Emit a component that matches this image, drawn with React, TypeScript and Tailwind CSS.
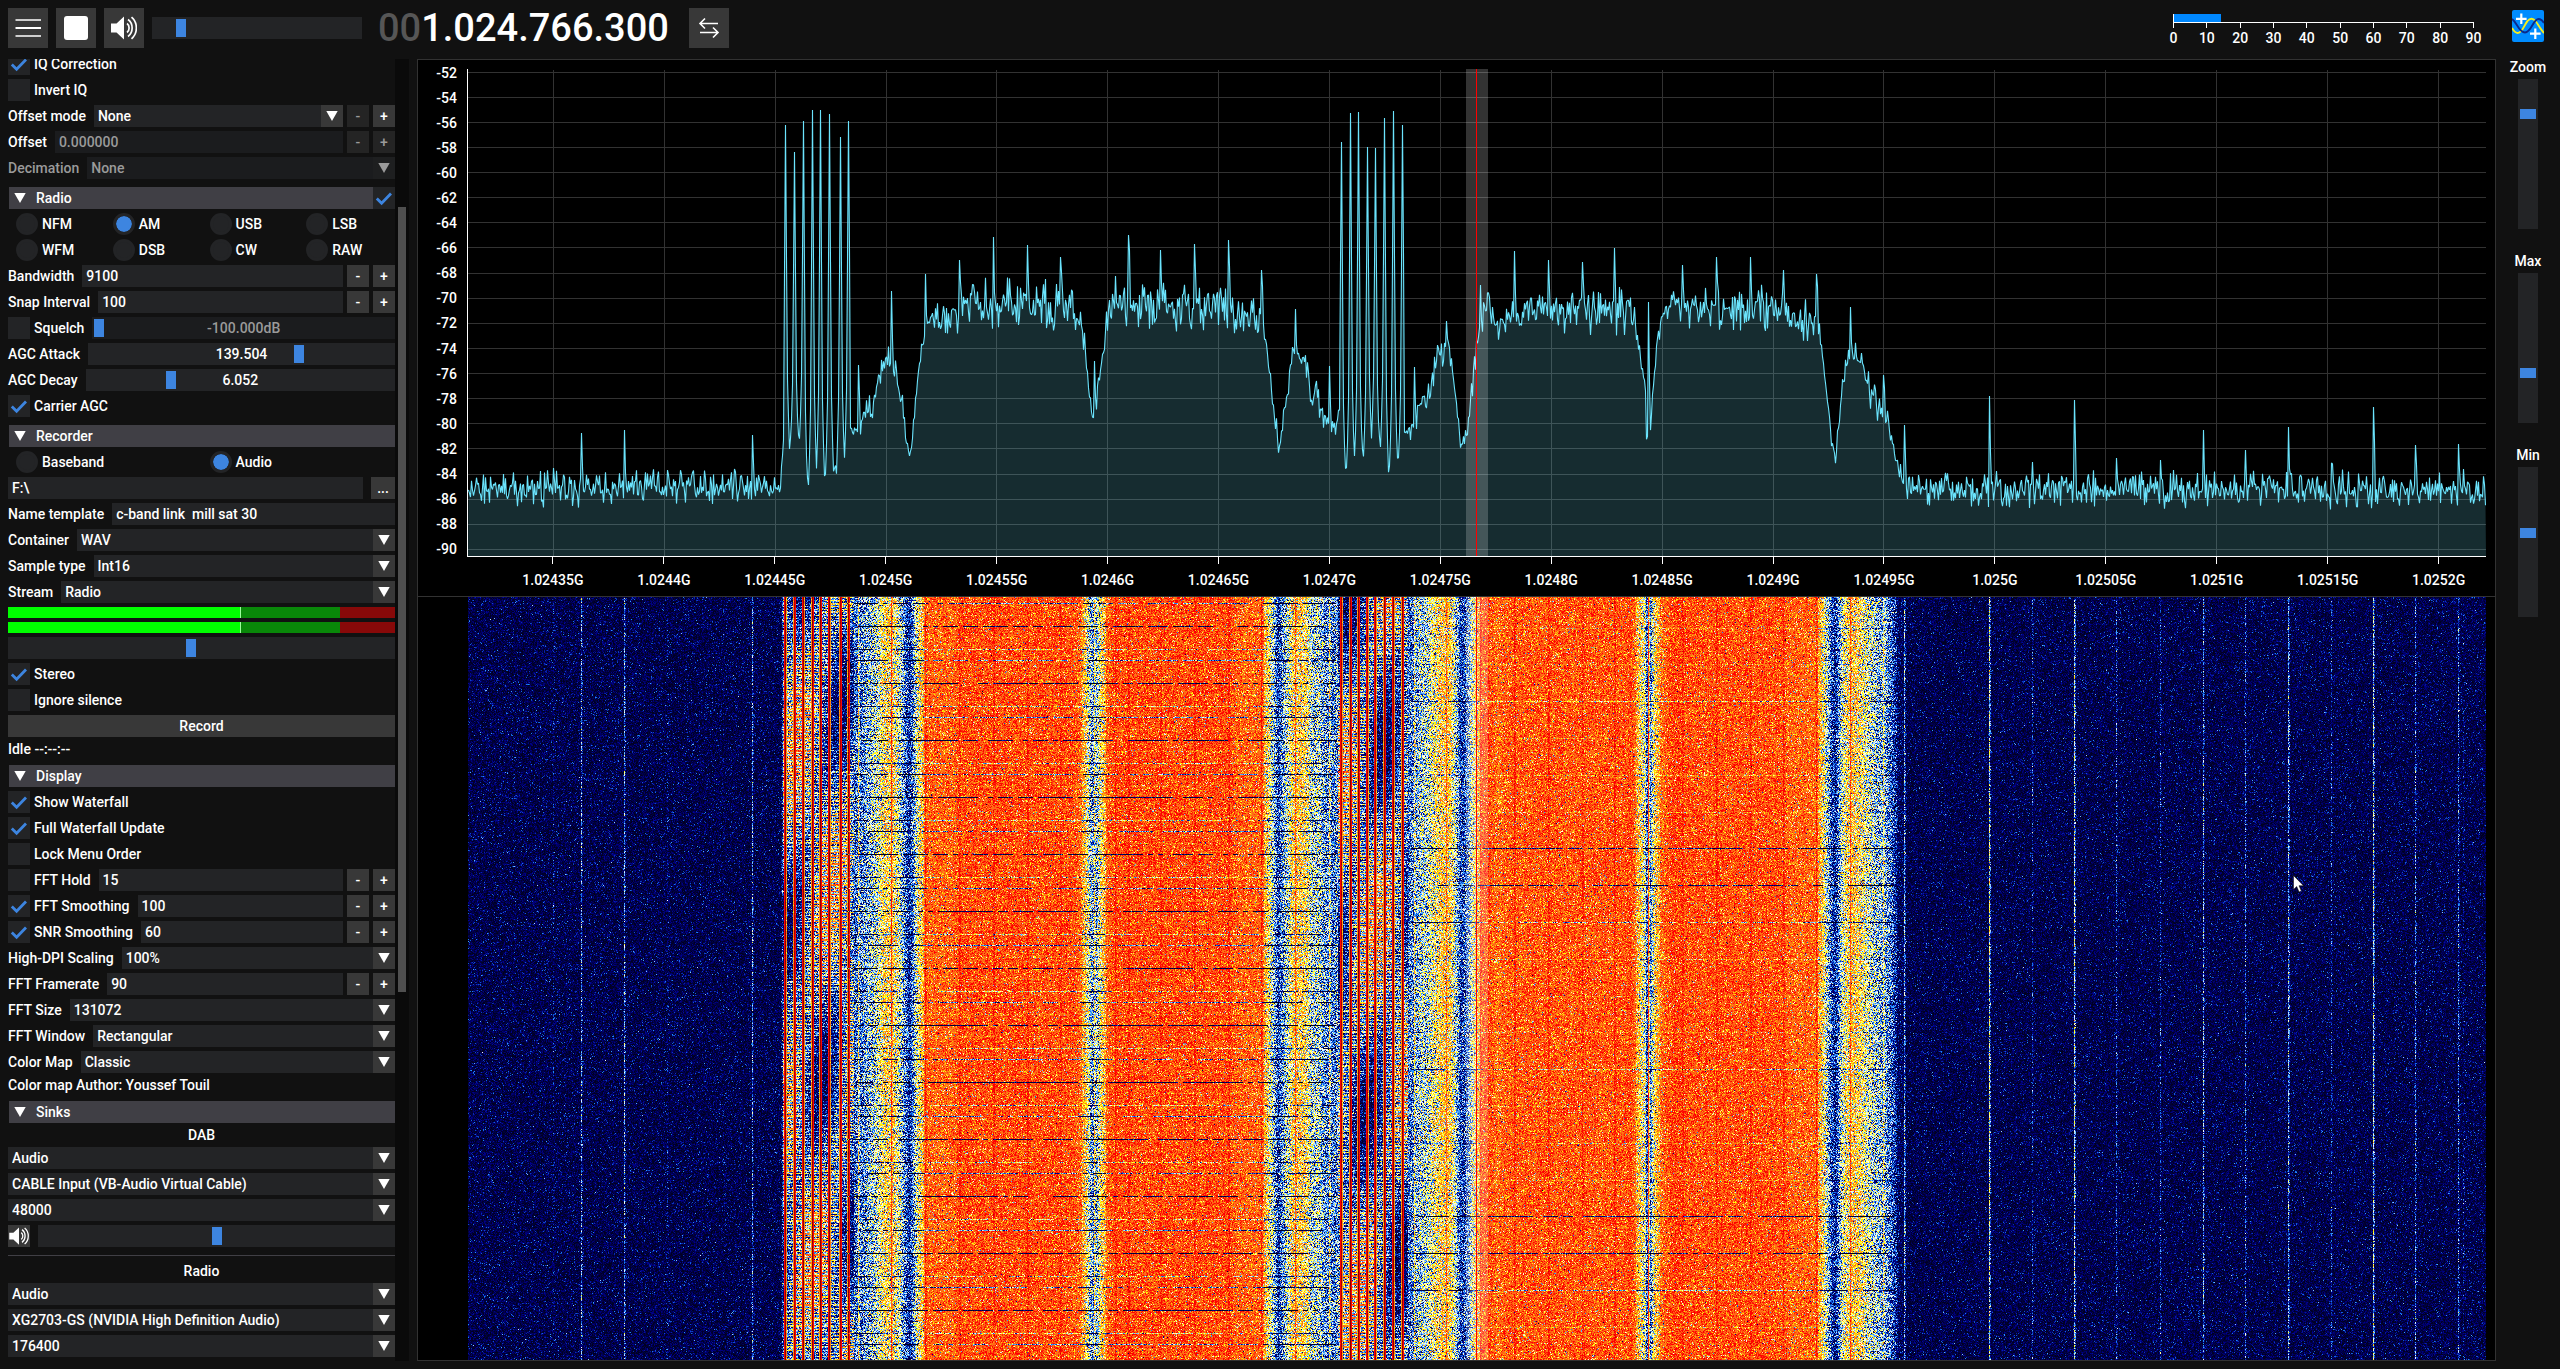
import React, { useEffect, useId, useMemo, useRef } from 'react';

/* ---------- signal model ---------- */

const PLOT_W = 2018;
const PLOT_TOP = 69;
const PLOT_H = 487;
const FALL_H = 763;

function makeRandom(seed: number) {
  let a = seed;
  return () => {
    a = (a + 0x6d2b79f5) | 0;
    let t = Math.imul(a ^ (a >>> 15), 1 | a);
    t = (t + Math.imul(t ^ (t >>> 7), 61 | t)) ^ t;
    return ((t ^ (t >>> 14)) >>> 0) / 4294967296;
  };
}

// Envelope of the spectrum: column, level, noise spread.
const ENVELOPE: number[][] = [
  [0, 489, 9], [300, 488, 9], [309, 487, 5], [312, 487, 4], [315, 440, 2], [384, 428, 4], [387, 433, 4],
  [393, 427, 8], [401, 407, 9], [406, 400, 9], [413, 373, 9], [418, 357, 8], [427, 368, 5],
  [433, 400, 8], [437, 433, 6], [441, 456, 2], [444, 433, 6], [447, 397, 4], [451, 363, 5],
  [454, 350, 6], [456, 323, 8], [464, 317, 11], [486, 320, 12], [491, 305, 12], [605, 306, 13],
  [611, 320, 9], [616, 340, 6], [619, 373, 4], [623, 413, 3], [627, 423, 2], [629, 397, 6],
  [633, 360, 6], [636, 343, 6], [638, 320, 8], [645, 305, 12], [763, 305, 13], [768, 318, 12],
  [794, 320, 12], [797, 343, 7], [801, 373, 5], [805, 403, 4], [808, 430, 6], [810, 450, 3],
  [812, 437, 4], [816, 410, 4], [820, 387, 6], [824, 357, 6], [832, 353, 6], [839, 367, 8],
  [843, 400, 8], [850, 397, 9], [857, 423, 8], [867, 427, 4], [870, 410, 2], [938, 433, 4], [945, 425, 7],
  [952, 400, 9], [958, 400, 8], [964, 378, 9], [971, 360, 9], [974, 350, 9], [982, 355, 6],
  [986, 390, 6], [990, 420, 4], [992, 446, 3], [996, 440, 5], [999, 430, 5], [1003, 390, 7],
  [1008, 350, 6], [1013, 320, 8], [1020, 305, 9], [1030, 328, 6], [1035, 316, 10], [1060, 311, 11],
  [1155, 311, 13], [1162, 300, 10], [1169, 338, 7], [1173, 362, 6], [1177, 388, 4], [1178, 436, 2],
  [1182, 430, 2], [1185, 374, 6], [1189, 338, 6], [1198, 313, 8], [1207, 296, 9], [1216, 308, 12],
  [1314, 308, 13], [1321, 320, 12], [1348, 320, 12], [1352, 340, 6], [1356, 374, 4], [1360, 411, 4],
  [1363, 442, 4], [1367, 459, 2], [1370, 428, 6], [1373, 395, 6], [1377, 368, 7], [1385, 350, 7],
  [1392, 364, 8], [1399, 388, 10], [1408, 405, 11], [1417, 418, 9], [1423, 435, 6], [1428, 462, 5],
  [1432, 476, 7], [1439, 489, 9], [2018, 489, 9],
];

// Single-column carriers.
const CARRIERS: number[][] = [
  [85, 468], [113, 433], [156, 430], [199, 470], [284, 435], [390, 365], [423, 291], [457, 274], [491, 260],
  [525, 237], [559, 245], [592, 257], [626, 361], [647, 276], [660, 235], [692, 250], [726, 244],
  [760, 240], [793, 270], [827, 309], [861, 366], [946, 367], [978, 321], [1012, 285], [1046, 251],
  [1080, 260], [1114, 262], [1146, 248], [1180, 302], [1214, 265], [1248, 257], [1282, 257],
  [1315, 270], [1348, 274], [1382, 307], [1415, 375], [1436, 425], [1521, 396], [1564, 462], [1606, 400],
  [1648, 458], [1692, 460], [1735, 430], [1777, 450], [1820, 427], [1863, 463], [1905, 407],
  [1947, 445], [1990, 444], [1995, 469],
];

// Two combs of strong tones: tone column, tone level, level of the gap that follows.
const COMBS: number[][][] = [
  [[317, 125, 443], [326, 152, 440], [335, 121, 485], [344, 110, 466], [352, 110, 473], [361, 114, 467], [372, 137, 458], [380, 121, 430]],
  [[873, 142, 471], [882, 113, 460], [890, 112, 456], [899, 147, 435], [907, 148, 445], [916, 118, 467], [925, 111, 460], [934, 125, 433]],
];

function buildSpectrum() {
  const mean = new Float32Array(PLOT_W + 1);
  const spread = new Float32Array(PLOT_W + 1);
  for (let i = 0; i < ENVELOPE.length - 1; i++) {
    const [x0, y0, s0] = ENVELOPE[i];
    const [x1, y1, s1] = ENVELOPE[i + 1];
    for (let x = x0; x <= x1; x++) {
      const t = (x - x0) / (x1 - x0);
      mean[x] = y0 + (y1 - y0) * t;
      spread[x] = s0 + (s1 - s0) * t;
    }
  }
  for (const [x, y] of CARRIERS) {
    const base = mean[x];
    mean[x] = y;
    spread[x] = 0;
    mean[x + 1] = Math.min(mean[x + 1], base * 0.6 + y * 0.4);
  }
  for (const comb of COMBS) {
    let before = comb === COMBS[0] ? 478 : 430;
    comb.forEach(([x, y, after], i) => {
      const next = comb[i + 1] ? comb[i + 1][0] : x + 5;
      const prev = comb[i - 1] ? comb[i - 1][0] : x - 5;
      const mix = [0, 0.42, 0.8, 0.92];
      for (let d = 0; d <= 3; d++) {
        if (x + d < next - 3) mean[x + d] = y + (after - y) * mix[d];
        if (d && x - d > prev + 3) mean[x - d] = y + (before - y) * mix[d];
        spread[x + d] = spread[x - d] = 0;
      }
      for (let k = x + 4; k < next - 3; k++) {
        mean[k] = after;
        spread[k] = 4;
      }
      before = after;
    });
  }
  return { mean, spread };
}

const PALETTE = [
  [0, 0, 32], [0, 0, 48], [0, 0, 80], [0, 0, 145], [30, 144, 255], [255, 255, 255], [255, 255, 0],
  [254, 109, 22], [254, 109, 22], [255, 0, 0], [255, 0, 0], [198, 0, 0], [159, 0, 0], [117, 0, 0], [74, 0, 0],
];

function paintWaterfall(canvas: HTMLCanvasElement) {
  const ctx = canvas.getContext('2d');
  if (!ctx) return;
  const { mean } = buildSpectrum();
  const random = makeRandom(77);
  const image = ctx.createImageData(PLOT_W, FALL_H);
  const bandOneDrop = [6.5, 0.6, 2.8, 4.2, 0.6];
  const bandTwoDrop = [1, 1.5, 1.2, 5.6, 5.6, 3.4, 1.4, 1, 1, 2.6];
  const lut = new Uint8Array(1400 * 3);
  for (let i = 0; i < 1400; i++) {
    const lo = Math.floor(i / 100);
    const t = i / 100 - lo;
    const a = PALETTE[lo];
    const b = PALETTE[Math.min(14, lo + 1)];
    for (let c = 0; c < 3; c++) lut[i * 3 + c] = a[c] + (b[c] - a[c]) * t;
  }

  // Average level of each column, and the tones of the combs.
  const base = new Float32Array(PLOT_W);
  const tone = new Uint8Array(PLOT_W);
  for (let x = 0; x < PLOT_W; x++) {
    const y = mean[x];
    let level = ((556 - y) / 488) * 14;
    if (y < 330) level = Math.min(level + 0.75, 8.7);
    else if (y > 465) level -= 0.45;
    base[x] = level;
  }
  for (const comb of COMBS) {
    for (const [x, y] of comb) {
      base[x] = y < 130 ? 12.4 : 11.6;
      base[x - 1] = x % 2 ? 9.6 : 6.8;
      base[x + 1] = x % 2 ? 6.8 : 9.6;
      tone[x - 1] = tone[x] = tone[x + 1] = 1;
    }
  }

  for (let y = 0; y < FALL_H; y++) {
    const k1 = Math.round((y - 29) / 11.4);
    const drop1 = Math.abs(y - (29 + k1 * 11.4)) < 0.5 ? bandOneDrop[((k1 % 5) + 5) % 5] : 0;
    const k2 = Math.round((y - 141) / 36.8);
    const drop2 = Math.abs(y - (141 + k2 * 36.8)) < 0.5 ? bandTwoDrop[(k2 + 10) % 10] : 0;
    const burst = y % 3 === 0 || y % 7 === 0 ? 2.1 : 0;
    let hole = false;
    for (let x = 0; x < PLOT_W; x++) {
      if (x % 5 === 0) hole = random() < 0.22;
      let level = base[x];
      if (!hole && drop1 && x > 378 && x < 868) level -= drop1;
      if (!hole && drop2 && x > 942 && x < 1426) level -= drop2;
      const comb = (x > 314 && x < 386) || (x > 869 && x < 940);
      if (comb && !tone[x]) {
        const drift = Math.sin(y / 47 + x / 11) + Math.sin(y / 71 - x / 17);
        level = 3.2 + drift * 0.7 + burst * (0.8 + drift * 0.3);
      }
      const power = -(Math.log(random() + 1e-6) + Math.log(random() + 1e-6)) / 2;
      level += (Math.log10(power) * 3.4 + 0.5) * (tone[x] ? 0.3 : 1);
      const idx = Math.max(0, Math.min(1399, Math.round(level * 100))) * 3;
      const p = (y * PLOT_W + x) * 4;
      image.data[p] = lut[idx];
      image.data[p + 1] = lut[idx + 1];
      image.data[p + 2] = lut[idx + 2];
      image.data[p + 3] = 255;
    }
  }
  ctx.putImageData(image, 0, 0);
}

/* ---------- icons ---------- */

const Triangle = () => (
  <svg viewBox="0 0 22 22" className="size-[22px] shrink-0" aria-hidden="true">
    <path d="M5.3 6h11.4L11 16z" fill="currentColor" />
  </svg>
);

const Tick = () => (
  <svg viewBox="0 0 22 22" className="pointer-events-none absolute inset-0 hidden size-[22px] peer-checked:block" aria-hidden="true">
    <path d="M3.8 11.4 8.6 16.2 18 6.6" fill="none" stroke="#3d85e0" strokeWidth="2.8" />
  </svg>
);

const Speaker = ({ className }: { className: string }) => (
  <svg viewBox="0 0 26 24" className={className} aria-hidden="true">
    <path d="M0 7.500h5.500L13 0.500v23L5.500 16.500H0z" fill="#fff" />
    <path d="M16 7.500c2.800 2 2.800 7 0 9M17 3.500c5.500 4 5.500 13 0 17M20.500 1.200c6.500 5.500 6.500 16.100 0 21.600" fill="none" stroke="#fff" strokeWidth="1.700" />
  </svg>
);

/* ---------- controls ---------- */

const Check = ({ label, on }: { label?: string; on?: boolean }) => (
  <label className="flex shrink-0 items-center gap-1">
    <span className="relative block size-[22px] shrink-0">
      <input type="checkbox" defaultChecked={on} aria-label={label ?? 'Enabled'} className="peer block size-[22px] appearance-none bg-[#232426]" />
      <Tick />
    </span>
    {label}
  </label>
);

const Radio = ({ name, label, on }: { name: string; label: string; on?: boolean }) => (
  <label className="flex items-center gap-1 pl-2">
    <input
      type="radio"
      name={name}
      defaultChecked={on}
      className="size-[22px] shrink-0 appearance-none rounded-full border-[3px] border-[#232426] bg-[#232426] checked:bg-[#3d85e0] checked:[background-clip:padding-box]"
    />
    {label}
  </label>
);

const Slider = ({ label, value, text, dim }: { label: string; value: number; text?: string; dim?: boolean }) => (
  <div className={`relative h-[22px] min-w-0 flex-1 ${dim ? 'bg-[#1b1c1e]' : 'bg-[#232426]'}`}>
    <input
      type="range"
      aria-label={label}
      min={0}
      max={100}
      step={0.1}
      defaultValue={value}
      className="block h-[22px] w-full appearance-none bg-transparent px-0.5 [&::-webkit-slider-thumb]:h-[18px] [&::-webkit-slider-thumb]:w-2.5 [&::-webkit-slider-thumb]:appearance-none [&::-webkit-slider-thumb]:bg-[#3d85e0]"
    />
    {text && (
      <span className={`pointer-events-none absolute inset-0 text-center ${dim ? 'text-[#9a9a9a]' : ''}`}>{text}</span>
    )}
  </div>
);

const VSlider = ({ label, value }: { label: string; value: number }) => (
  <label className="flex flex-col items-center gap-1 leading-4">
    {label}
    <input
      type="range"
      min={0}
      max={100}
      step={0.1}
      defaultValue={value}
      className="h-[150px] w-5 appearance-none bg-[#232426] py-0.5 [direction:rtl] [writing-mode:vertical-lr] [&::-webkit-slider-thumb]:h-2.5 [&::-webkit-slider-thumb]:w-4 [&::-webkit-slider-thumb]:appearance-none [&::-webkit-slider-thumb]:bg-[#3d85e0]"
    />
  </label>
);

const Step = ({ sign, dim }: { sign: string; dim?: boolean }) => (
  <button type="button" className={`size-[22px] shrink-0 ${dim ? 'bg-[#242424] text-[#9a9a9a]' : 'bg-[#383838]'}`}>
    {sign}
  </button>
);

const Row = ({ children }: { children: React.ReactNode }) => (
  <div className="flex h-[22px] items-center gap-2">{children}</div>
);

const Field = ({ label, value, check, steps, dim }: { label: string; value: string; check?: 'on' | 'off'; steps?: boolean; dim?: boolean }) => {
  const id = useId();
  return (
    <Row>
      {check ? <Check label={label} on={check === 'on'} /> : <label htmlFor={id} className="shrink-0">{label}</label>}
      <div className="flex min-w-0 flex-1 gap-1">
        <input
          id={id}
          type="text"
          aria-label={label}
          defaultValue={value}
          className={`h-[22px] w-0 flex-1 px-1 ${dim ? 'bg-[#1b1c1e] text-[#9a9a9a]' : 'bg-[#232426]'}`}
        />
        {steps && <Step sign="-" dim={dim} />}
        {steps && <Step sign="+" dim={dim} />}
      </div>
    </Row>
  );
};

const Combo = ({ value, id, name, dim }: { value: string; id?: string; name?: string; dim?: boolean }) => (
  <div className="relative min-w-0 flex-1">
    <select id={id} aria-label={name} className={`block h-[22px] w-full appearance-none px-1 ${dim ? 'bg-[#1b1c1e]' : 'bg-[#232426]'}`}>
      <option>{value}</option>
    </select>
    <span className={`pointer-events-none absolute inset-y-0 right-0 ${dim ? 'bg-[#1e1f20]' : 'bg-[#383838]'}`}>
      <Triangle />
    </span>
  </div>
);

const ComboRow = ({ label, value, dim }: { label: string; value: string; dim?: boolean }) => {
  const id = useId();
  return (
    <div className={`flex h-[22px] items-center gap-2 ${dim ? 'text-[#9a9a9a]' : ''}`}>
      <label htmlFor={id} className="shrink-0">{label}</label>
      <Combo id={id} value={value} dim={dim} />
    </div>
  );
};

const Section = ({ title, toggle }: { title: string; toggle?: boolean }) => (
  <div className="mt-1 ml-px flex h-[22px]">
    <button type="button" className="flex flex-1 items-center gap-[5px] bg-[#403f45] text-left">
      <Triangle />
      {title}
    </button>
    {toggle && <Check on />}
  </div>
);

const Meter = () => (
  <div className="flex h-[11px]">
    <div className="w-[60.3%] border-r border-[#9dff9d] bg-[#00ff00]" />
    <div className="w-[25.5%] bg-[#098809]" />
    <div className="flex-1 bg-[#880909]" />
  </div>
);

/* ---------- sidebar ---------- */

function Sidebar() {
  const modeId = useId();
  return (
    <aside className="flex w-[409px] shrink-0 overflow-hidden pl-2">
      <div className="-mt-1.5 flex min-w-0 flex-1 flex-col gap-1">
        <Check label="IQ Correction" on />
        <Check label="Invert IQ" />
        <Row>
          <label htmlFor={modeId} className="shrink-0">Offset mode</label>
          <div className="flex min-w-0 flex-1 gap-1">
            <Combo id={modeId} value="None" />
            <Step sign="-" dim />
            <Step sign="+" />
          </div>
        </Row>
        <Field label="Offset" value="0.000000" steps dim />
        <ComboRow label="Decimation" value="None" dim />

        <Section title="Radio" toggle />
        <div className="grid grid-cols-4 gap-y-1">
          {['NFM', 'AM', 'USB', 'LSB', 'WFM', 'DSB', 'CW', 'RAW'].map((m) => (
            <Radio key={m} name="mode" label={m} on={m === 'AM'} />
          ))}
        </div>
        <Field label="Bandwidth" value="9100" steps />
        <Field label="Snap Interval" value="100" steps />
        <Row>
          <Check label="Squelch" />
          <Slider label="Squelch level" value={0} text="-100.000dB" dim />
        </Row>
        <Row>
          <span>AGC Attack</span>
          <Slider label="AGC Attack" value={69.7} text="139.504" />
        </Row>
        <Row>
          <span>AGC Decay</span>
          <Slider label="AGC Decay" value={26.7} text="6.052" />
        </Row>
        <Check label="Carrier AGC" on />

        <Section title="Recorder" />
        <div className="grid grid-cols-2">
          <Radio name="source" label="Baseband" />
          <Radio name="source" label="Audio" on />
        </div>
        <Row>
          <input type="text" aria-label="Recording folder" defaultValue="F:\" className="h-[22px] w-0 flex-1 bg-[#232426] px-1" />
          <button type="button" className="h-[22px] w-6 bg-[#383838]">...</button>
        </Row>
        <Field label="Name template" value="c-band link  mill sat 30" />
        <ComboRow label="Container" value="WAV" />
        <ComboRow label="Sample type" value="Int16" />
        <ComboRow label="Stream" value="Radio" />
        <Meter />
        <Meter />
        <Row>
          <Slider label="Recording volume" value={47.2} />
        </Row>
        <Check label="Stereo" on />
        <Check label="Ignore silence" />
        <button type="button" className="h-[22px] bg-[#383838]">Record</button>
        <p className="leading-4">Idle --:--:--</p>

        <Section title="Display" />
        <Check label="Show Waterfall" on />
        <Check label="Full Waterfall Update" on />
        <Check label="Lock Menu Order" />
        <Field label="FFT Hold" value="15" check="off" steps />
        <Field label="FFT Smoothing" value="100" check="on" steps />
        <Field label="SNR Smoothing" value="60" check="on" steps />
        <ComboRow label="High-DPI Scaling" value="100%" />
        <Field label="FFT Framerate" value="90" steps />
        <ComboRow label="FFT Size" value="131072" />
        <ComboRow label="FFT Window" value="Rectangular" />
        <ComboRow label="Color Map" value="Classic" />
        <p className="leading-4">Color map Author: Youssef Touil</p>

        <Section title="Sinks" />
        <h3 className="text-center leading-4">DAB</h3>
        <Row><Combo name="DAB sink" value="Audio" /></Row>
        <Row><Combo name="DAB device" value="CABLE Input (VB-Audio Virtual Cable)" /></Row>
        <Row><Combo name="DAB sample rate" value="48000" /></Row>
        <Row>
          <button type="button" aria-label="Mute DAB" className="flex size-[22px] items-center justify-center bg-[#383838]">
            <Speaker className="h-[18px] w-5" />
          </button>
          <Slider label="DAB volume" value={50.1} />
        </Row>
        <div className="h-2 pt-1">
          <div className="h-px bg-[#403f45]" />
        </div>
        <h3 className="text-center leading-4">Radio</h3>
        <Row><Combo name="Radio sink" value="Audio" /></Row>
        <Row><Combo name="Radio device" value="XG2703-GS (NVIDIA High Definition Audio)" /></Row>
        <Row><Combo name="Radio sample rate" value="176400" /></Row>
      </div>
      <div className="flex w-3.5 shrink-0 flex-col bg-[#0a0a0a] px-[3px]">
        <div className="mt-[148px] h-[785px] bg-[#4f4f4f]" />
      </div>
    </aside>
  );
}

/* ---------- top bar ---------- */

const ToolButton = ({ label, children }: { label: string; children: React.ReactNode }) => (
  <button type="button" aria-label={label} className="flex size-10 shrink-0 items-center justify-center bg-[#383838]">
    {children}
  </button>
);

function SnrMeter() {
  const marks = [0, 10, 20, 30, 40, 50, 60, 70, 80, 90];
  return (
    <div className="mt-1.5 mr-[38px] w-[301px]">
      <div className="h-[9px] border-b border-l border-white">
        <div className="h-2 w-[15.500%] bg-[#0088ff]" />
      </div>
      <div className="flex justify-between">
        {marks.map((m) => <span key={m} className="h-[5px] w-px bg-white" />)}
      </div>
      <div className="mt-0.5 flex justify-between leading-4">
        {marks.map((m) => <span key={m} className="flex w-px justify-center">{m}</span>)}
      </div>
    </div>
  );
}

function TopBar() {
  return (
    <header className="flex h-[59px] shrink-0 items-start px-2 pt-2">
      <div className="flex h-10 items-center gap-2">
        <ToolButton label="Menu">
          <svg viewBox="0 0 40 40" className="size-10" aria-hidden="true">
            <path d="M7.500 12h25.500M7.500 28h25.500" stroke="#fff" strokeWidth="1.500" />
            <path d="M7.500 20h25.500" stroke="#fff" strokeWidth="2" />
          </svg>
        </ToolButton>
        <ToolButton label="Stop">
          <svg viewBox="0 0 40 40" className="size-10" aria-hidden="true">
            <rect x="8" y="8" width="24" height="24" rx="3" fill="#fff" />
          </svg>
        </ToolButton>
        <ToolButton label="Mute">
          <Speaker className="h-6 w-[26px]" />
        </ToolButton>
        <div className="flex w-[210px]">
          <Slider label="Volume" value={11.200} />
        </div>
        <div className="pr-3 pl-2 text-[38px] leading-10 whitespace-nowrap">
          <span className="text-[#565656]">00</span>1.024.766.300
        </div>
        <ToolButton label="Tuning mode">
          <svg viewBox="0 0 40 40" className="size-10" aria-hidden="true">
            <path d="M29 15.500H11.500M16 10.500 11 15.500l5 5M11 24.500h17.500M24 19.500l5 5-5 5" fill="none" stroke="#fff" strokeWidth="1.600" />
          </svg>
        </ToolButton>
      </div>
      <div className="flex-1" />
      <SnrMeter />
      <svg viewBox="0 0 32 32" className="mt-0.5 mr-2 size-8" role="img" aria-label="SDR++">
        <rect width="32" height="32" rx="2" fill="#008cff" />
        <path d="M0 18c2 3.500 3.500 5 5.500 5 5 0 6.500-8 10-12 2.500-3 5.500-3 8 0s4.500 8 8.500 12" fill="none" stroke="#f7ef1c" strokeWidth="1.900" />
        <path d="M0 9c5 3 6.500 13.500 13 13.500S21 9 26.500 9c2.500 0 4 1.500 5.500 4" fill="none" stroke="#0a2a8c" strokeWidth="1.900" />
        <path d="M9.300 3.500v10.600M4 8.800h10.600M23.300 18.400V29M18 23.700h10.600" stroke="#fff" strokeWidth="2.200" />
      </svg>
    </header>
  );
}

/* ---------- spectrum and waterfall ---------- */

const LEVELS = Array.from({ length: 20 }, (_, i) => -52 - 2 * i);
const FREQS = [
  '1.02435G', '1.0244G', '1.02445G', '1.0245G', '1.02455G', '1.0246G', '1.02465G', '1.0247G', '1.02475G',
  '1.0248G', '1.02485G', '1.0249G', '1.02495G', '1.025G', '1.02505G', '1.0251G', '1.02515G', '1.0252G',
];

const Vfo = () => (
  <div className="pointer-events-none absolute inset-y-0 left-[49.450%] flex w-[1.090%] justify-center bg-white/20">
    <div className="w-px bg-[#ff0000]" />
  </div>
);

function Spectrum() {
  const points = useMemo(() => {
    const { mean, spread } = buildSpectrum();
    const random = makeRandom(11);
    const out: string[] = [];
    for (let x = 0; x < PLOT_W; x++) {
      const noise = (random() + random() - 1) * 2.3 * spread[x];
      out.push(`${x + 0.5},${(mean[x] + noise).toFixed(1)}`);
    }
    return out.join(' ');
  }, []);
  return (
    <div className="flex h-[537px] shrink-0 border-b border-[#323232] pt-[9px] pr-[9px]">
      <div className="flex h-[481px] w-[49px] flex-col justify-between pt-[3px] pr-2.5 text-right">
        {LEVELS.map((l) => <span key={l} className="flex h-px items-center justify-end">{l}</span>)}
      </div>
      <div className="min-w-0 flex-1">
        <div className="relative h-[488px] border-b border-l border-white">
          <svg
            viewBox={`0 ${PLOT_TOP} ${PLOT_W} ${PLOT_H}`}
            preserveAspectRatio="none"
            className="block h-full w-full"
            role="img"
            aria-label="Spectrum"
          >
            <g stroke="#323232" shapeRendering="crispEdges">
              {LEVELS.map((l, i) => {
                const y = Math.floor(72 + i * 25.13) + 0.5;
                return <line key={l} x1="0" x2={PLOT_W} y1={y} y2={y} />;
              })}
              {FREQS.map((f, i) => {
                const x = Math.floor(85.4 + i * 110.88) + 0.5;
                return <line key={f} x1={x} x2={x} y1="70" y2="556" />;
              })}
            </g>
            <polygon points={`0,556 ${points} ${PLOT_W},556`} fill="#6edcf0" fillOpacity="0.2" />
            <polyline points={points} fill="none" stroke="#6be4fd" strokeWidth="1.1" strokeLinejoin="bevel" />
          </svg>
          <Vfo />
        </div>
        <div className="flex justify-between pr-[2.320%] pl-[4.230%]">
          {FREQS.map((f) => <span key={f} className="h-[7px] w-px bg-white" />)}
        </div>
        <div className="mt-2 flex justify-between pr-[2.320%] pl-[4.230%] leading-4">
          {FREQS.map((f) => <span key={f} className="flex w-px justify-center">{f}</span>)}
        </div>
      </div>
    </div>
  );
}

function Waterfall() {
  const ref = useRef<HTMLCanvasElement>(null);
  useEffect(() => {
    if (ref.current) paintWaterfall(ref.current);
  }, []);
  return (
    <div className="min-h-0 flex-1 pr-[9px] pl-[50px]">
      <div className="relative h-full">
        <canvas ref={ref} width={PLOT_W} height={FALL_H} className="block h-full w-full [image-rendering:pixelated]" aria-label="Waterfall" />
        <Vfo />
        <svg viewBox="0 0 12 18" className="absolute top-[36.500%] left-[90.450%] h-[18px] w-3" aria-hidden="true">
          <path d="M0.500 0.500v14l3.200-3 2.400 5.500 2.300-1-2.400-5.300h4.500z" fill="#fff" stroke="#000" strokeWidth="0.500" />
        </svg>
      </div>
    </div>
  );
}

export default function App() {
  return (
    <div className="flex h-screen flex-col overflow-hidden bg-[#111111] pb-2 font-['Roboto',sans-serif] text-sm leading-[22px] font-medium text-white">
      <TopBar />
      <div className="flex min-h-0 flex-1">
        <Sidebar />
        <main className="ml-2 flex min-w-0 flex-1 flex-col border border-[#323232] bg-black">
          <Spectrum />
          <Waterfall />
        </main>
        <div className="flex w-16 shrink-0 flex-col gap-6">
          <VSlider label="Zoom" value={78.700} />
          <VSlider label="Max" value={32.400} />
          <VSlider label="Min" value={56.600} />
        </div>
      </div>
    </div>
  );
}
